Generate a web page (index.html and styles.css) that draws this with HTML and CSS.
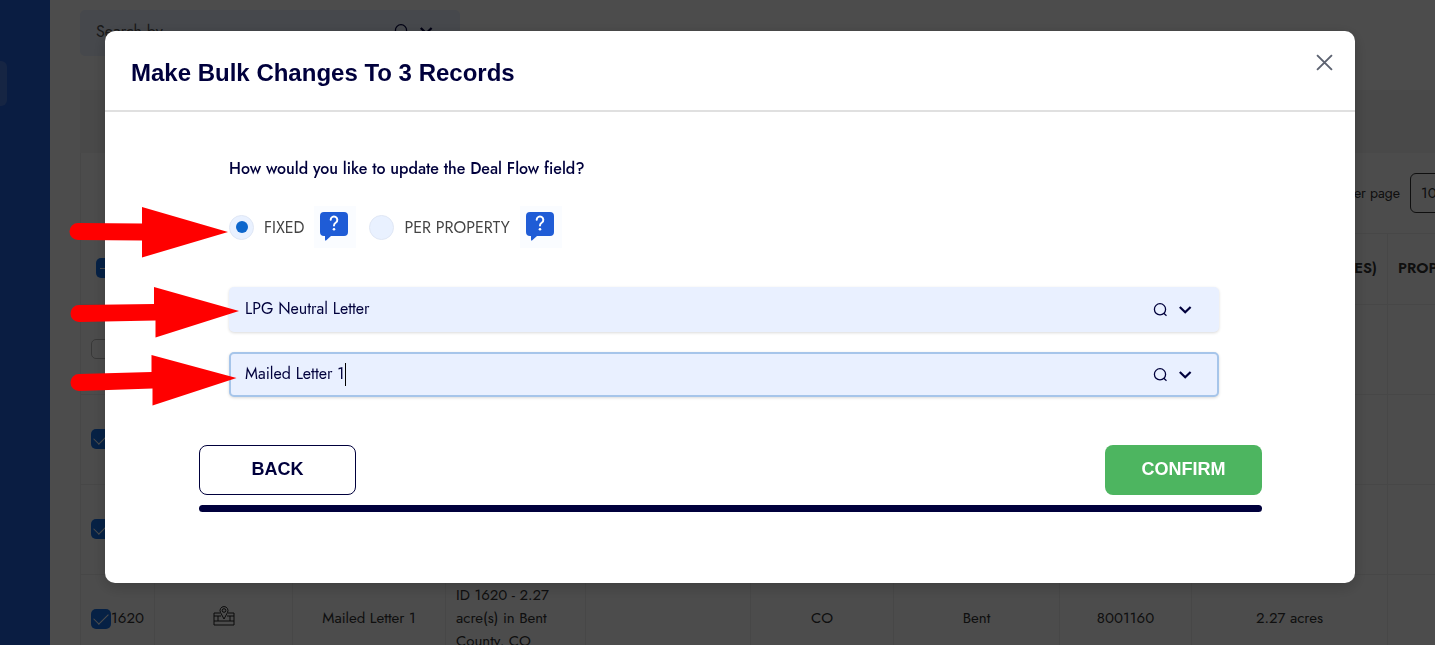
FILE: index.html
```
<!DOCTYPE html>
<html lang="en">
<head>
    <meta charset="UTF-8">
    <meta name="viewport" content="width=device-width, initial-scale=1.0">
    <title>Make Bulk Changes</title>
    <link rel="stylesheet" href="styles.css">
</head>
<body>
    <svg class="sprite" aria-hidden="true">
        <symbol id="search" viewBox="0 0 16 16"><circle cx="8" cy="7.300" r="5.600"/><path d="M11.800 11.300l2.700 2.400"/></symbol>
        <symbol id="chevron" viewBox="0 0 16 16"><path d="M2.800 5l5.400 5.300L13.600 5"/></symbol>
        <symbol id="help" viewBox="0 0 30 30">
            <path d="M5 0h20a4 4 0 0 1 4 4v16a4 4 0 0 1-4 4H12l-5 4.500q-1 .5-1-1V24H5a4 4 0 0 1-4-4V4a4 4 0 0 1 4-4z" fill="#1f5cd6"/>
            <path d="M11.700 7.800a3.300 3.300 0 1 1 5.200 2.700c-1.500 1-1.900 1.500-1.900 3" fill="none" stroke="#fff" stroke-width="2" stroke-linecap="round"/>
            <circle cx="15" cy="17.300" r="1.300" fill="#fff"/>
        </symbol>
    </svg>

    <!-- page behind the modal -->
    <div class="page">
        <nav class="sidebar"><a href="#" class="sidebar-item" aria-label="Properties"></a></nav>
        <main class="content">
            <div class="search">
                <input type="text" placeholder="Search by" aria-label="Search by">
                <svg class="icon"><use href="#search"/></svg>
                <svg class="icon icon-chevron"><use href="#chevron"/></svg>
            </div>
            <div class="band"></div>
            <div class="toolbar">
                <label for="perPage">Rows per page</label>
                <select id="perPage"><option>10</option></select>
            </div>
            <table>
                <colgroup>
                    <col class="w-id"><col class="w-map"><col class="w-status"><col class="w-title"><col class="w-owner">
                    <col class="w-state"><col class="w-county"><col class="w-apn"><col class="w-size"><col>
                </colgroup>
                <thead>
                    <tr>
                        <th class="select-all"><input type="checkbox" class="some" aria-label="Select all"></th>
                        <th></th><th></th><th></th><th></th><th></th><th></th><th></th>
                        <th class="right">SIZE (ACRES)</th>
                        <th class="left">PROPERTY TYPE</th>
                    </tr>
                </thead>
                <tbody>
                    <tr><td><input type="checkbox" aria-label="Select row"></td><td></td><td></td><td></td><td></td><td></td><td></td><td></td><td></td><td></td></tr>
                    <tr><td><input type="checkbox" checked aria-label="Select row"></td><td></td><td></td><td></td><td></td><td></td><td></td><td></td><td></td><td></td></tr>
                    <tr><td><input type="checkbox" checked aria-label="Select row"></td><td></td><td></td><td></td><td></td><td></td><td></td><td></td><td></td><td></td></tr>
                    <tr>
                        <td><label class="row-id"><input type="checkbox" checked>1620</label></td>
                        <td>
                            <svg class="map-icon" viewBox="0 0 22 22">
                                <path d="M7 8H1v12h20V8h-6M1 11h7M14 11h7M1 16h20M5 11v5M17 11v5M11 14L7.500 7.500a4 4 0 1 1 7 0z"/>
                                <circle cx="11" cy="5.500" r="1.800"/>
                            </svg>
                        </td>
                        <td>Mailed Letter 1</td>
                        <td class="left">ID 1620 - 2.27 acre(s) in Bent County, CO</td>
                        <td></td>
                        <td>CO</td>
                        <td>Bent</td>
                        <td>8001160</td>
                        <td>2.27 acres</td>
                        <td></td>
                    </tr>
                </tbody>
            </table>
        </main>
    </div>

    <div class="overlay">
        <div class="modal" role="dialog" aria-labelledby="modalTitle">
            <header class="modal-header">
                <h1 id="modalTitle">Make Bulk Changes To 3 Records</h1>
                <button type="button" class="close" aria-label="Close">
                    <svg viewBox="0 0 16 16"><path d="M1 1l14 14M15 1L1 15"/></svg>
                </button>
            </header>
            <form class="modal-body">
                <div class="fields">
                    <h2>How would you like to update the Deal Flow field?</h2>
                    <div class="options">
                        <label class="option"><input type="radio" name="mode" checked>FIXED</label>
                        <button type="button" class="help" aria-label="About fixed"><svg><use href="#help"/></svg></button>
                        <label class="option"><input type="radio" name="mode">PER PROPERTY</label>
                        <button type="button" class="help" aria-label="About per property"><svg><use href="#help"/></svg></button>
                    </div>
                    <div class="field">
                        <input type="text" value="LPG Neutral Letter" aria-label="Deal flow">
                        <svg class="icon"><use href="#search"/></svg>
                        <svg class="icon icon-chevron"><use href="#chevron"/></svg>
                    </div>
                    <div class="field active">
                        <input type="text" value="Mailed Letter 1" aria-label="Deal flow stage">
                        <span class="caret"></span>
                        <svg class="icon"><use href="#search"/></svg>
                        <svg class="icon icon-chevron"><use href="#chevron"/></svg>
                    </div>
                </div>
                <div class="actions">
                    <button type="button" class="button back">BACK</button>
                    <button type="submit" class="button confirm">CONFIRM</button>
                </div>
                <div class="progress"></div>
            </form>

            <!-- pointers to the three controls -->
            <svg class="arrows" viewBox="0 0 172 206" aria-hidden="true">
                <path d="M9 22L73 22.500V6L159 31 73 56.500V39.500L9 39a8.500 8.500 0 0 1 0-17z"/>
                <path d="M10 104L85 103V86L170 110 86.500 136.500V119.500L10 121a8.500 8.500 0 0 1 0-17z"/>
                <path d="M10 173L82.500 171V154L167.500 177 83.500 204.500V187.500L10 190a8.500 8.500 0 0 1 0-17z"/>
            </svg>
        </div>
    </div>
</body>
</html>
```
FILE: styles.css
```
* {
    box-sizing: border-box;
}
body {
    margin: 0;
    height: 100vh;
    overflow: hidden;
    background-color: white;
    color: #333;
    font-family: Jost, Lato, sans-serif;
    font-size: 15px;
}
input, select, button {
    font: inherit;
    color: inherit;
}
.sprite {
    display: none;
}
.page {
    display: flex;
    height: 100vh;
    overflow: hidden;
}
.sidebar {
    flex: 0 0 50px;
    padding-top: 61px;
    background-color: #2261dc;
}
.sidebar-item {
    display: block;
    width: 7px;
    height: 45px;
    border-radius: 0 6px 6px 0;
    background-color: #4c7de0;
}
.content {
    flex: none;
    width: 1550px;
    padding: 10px 0 0 30px;
}
.icon {
    width: 16px;
    height: 16px;
    fill: none;
    stroke: #00003c;
    stroke-width: 1.3;
}
.icon-chevron {
    margin-left: 9px;
    stroke-width: 2.2;
}
.search {
    display: flex;
    align-items: center;
    width: 380px;
    height: 46px;
    padding: 0 26px 4px 16px;
    border-radius: 5px;
    background-color: #e9f0ff;
    font-size: 16px;
}
.search input {
    flex: 1;
    min-width: 0;
    padding: 0;
    border: none;
    background: none;
}
.search input::placeholder {
    color: #555;
}
.band {
    height: 63px;
    margin-top: 34px;
    background-color: #f5f5f5;
}
.toolbar {
    display: flex;
    justify-content: flex-end;
    align-items: center;
    gap: 10px;
    height: 80px;
    padding-right: 100px;
    border-left: 1px solid #eee;
    font-size: 14px;
}
.toolbar select {
    width: 90px;
    height: 40px;
    padding-left: 6px;
    border: 1px solid #333;
    border-radius: 6px;
    background: none;
    font-size: 15px;
}
table {
    width: 100%;
    table-layout: fixed;
    border-collapse: collapse;
    line-height: 23px;
}
.w-id { width: 74px; }
.w-map { width: 138px; }
.w-status { width: 153px; }
.w-title { width: 140px; }
.w-owner { width: 165px; }
.w-state { width: 143px; }
.w-county { width: 166px; }
.w-apn { width: 132px; }
.w-size { width: 196px; }
th, td {
    height: 90px;
    padding: 0 10px 2px;
    border: 1px solid #efefef;
    text-align: center;
}
th {
    height: 71px;
    font-size: 15px;
    font-weight: 600;
    white-space: nowrap;
}
td:first-child {
    text-align: left;
}
.right {
    text-align: right;
}
.left {
    text-align: left;
}
.select-all {
    padding-left: 15px;
}
.row-id {
    display: flex;
    align-items: center;
}
input[type="checkbox"] {
    appearance: none;
    flex: none;
    display: grid;
    place-items: center;
    width: 20px;
    height: 20px;
    margin: 0;
    border: 1px solid #bbb;
    border-radius: 5px;
}
input[type="checkbox"]:checked, input[type="checkbox"].some {
    border: none;
    background-color: #1570e8;
}
input[type="checkbox"]:checked::before {
    content: "";
    width: 13px;
    height: 7px;
    border: solid white;
    border-width: 0 0 1px 1px;
    transform: translateY(-2px) rotate(-45deg);
}
.some::before {
    content: "";
    width: 12px;
    height: 1px;
    background-color: white;
}
.map-icon {
    width: 22px;
    height: 22px;
    margin-bottom: 6px;
    fill: none;
    stroke: #222;
    vertical-align: middle;
}

.overlay {
    position: fixed;
    inset: 0;
    padding: 31px 80px 0 105px;
    background-color: rgba(0, 0, 0, 0.7);
}
.modal {
    position: relative;
    padding-bottom: 71px;
    border-radius: 10px;
    background-color: white;
    box-shadow: 0 4px 16px rgba(0, 0, 0, 0.2);
    color: #00003c;
}
.modal-header {
    display: flex;
    justify-content: space-between;
    align-items: flex-start;
    height: 81px;
    padding: 23px 22px 0 26px;
    border-bottom: 2px solid #e0e0e0;
}
h1 {
    margin: 0;
    font: bold 24px/38px "Liberation Sans", sans-serif;
}
.close {
    padding: 0;
    border: none;
    background: none;
    cursor: pointer;
}
.close svg {
    display: block;
    width: 17px;
    height: 17px;
    fill: none;
    stroke: #5c6270;
    stroke-width: 1.8;
}
.modal-body {
    padding: 45px 93px 0 94px;
}
.fields {
    padding: 0 43px 0 30px;
    font-size: 16px;
}
h2 {
    margin: 0 0 24px;
    font-size: 16px;
    line-height: 24px;
    font-weight: 500;
}
.options {
    display: flex;
    align-items: center;
    height: 44px;
    margin-bottom: 38px;
}
.option {
    display: flex;
    align-items: center;
    gap: 10px;
    color: #444;
}
.option input {
    appearance: none;
    display: grid;
    place-items: center;
    width: 25px;
    height: 25px;
    margin: 0;
    border: 1px solid #e0e7f5;
    border-radius: 50%;
    background-color: #e9f1ff;
}
.option input:checked::before {
    content: "";
    width: 12px;
    height: 12px;
    border-radius: 50%;
    background-color: #0d66cc;
}
.help {
    width: 42px;
    height: 42px;
    margin: 0 13px 0 10px;
    padding: 6px 5px;
    border: none;
    background-color: #fafcff;
    cursor: pointer;
}
.help svg {
    display: block;
    width: 30px;
    height: 30px;
}
.field {
    display: flex;
    align-items: center;
    height: 45px;
    margin-bottom: 20px;
    padding: 0 26px 0 16px;
    border-radius: 5px;
    background-color: #e9f0ff;
    box-shadow: 0 1px 3px rgba(0, 0, 0, 0.15);
}
.field input {
    field-sizing: content;
    padding: 0 0 2px;
    border: none;
    outline: none;
    background: none;
    line-height: 24px;
}
.field .icon:not(.icon-chevron) {
    margin-left: auto;
}
.active {
    padding: 0 24px 0 14px;
    border: 2px solid #a6c5ea;
}
.caret {
    width: 1px;
    height: 23px;
    background-color: #000;
}
.actions {
    display: flex;
    justify-content: space-between;
    margin-top: 48px;
}
.button {
    width: 157px;
    height: 50px;
    padding: 0 0 1px;
    border-radius: 8px;
    font: bold 18px "Liberation Sans", sans-serif;
    cursor: pointer;
}
.back {
    border: 1px solid #00003c;
    background-color: white;
}
.confirm {
    border: none;
    background-color: #4db560;
    color: white;
}
.progress {
    height: 7px;
    margin-top: 10px;
    border-radius: 4px;
    background-color: #00003c;
}
.arrows {
    position: absolute;
    top: 170px;
    left: -36px;
    width: 172px;
    height: 206px;
    fill: red;
    pointer-events: none;
}
```
